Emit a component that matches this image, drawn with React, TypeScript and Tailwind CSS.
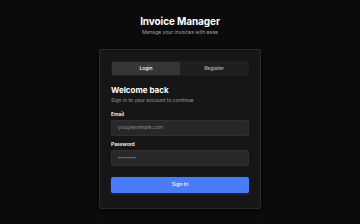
import React from "react";

export default function App() {
  return (
    <div
      className="min-h-[224px] w-full bg-[#0b0b0b] flex flex-col items-center text-white"
      style={{ fontFamily: "Inter, 'Noto Sans', sans-serif" }}
    >
      <h1 className="mt-[15px] text-[10px] leading-[12px] font-bold tracking-[-0.1px]">Invoice Manager</h1>
      <p className="mt-[1px] text-[5px] leading-[8px] text-[#a3a3a3]">Manage your invoices with ease</p>

      <div className="mt-[13px] w-[162px] rounded-[2px] border border-[#2a2a2a] bg-[#161616] px-[11px] pt-[11px] pb-[15px] shadow-[0_2px_6px_rgba(0,0,0,0.6)]">
        <div className="grid h-[15px] grid-cols-2 rounded-[2px] bg-[#1f1f1f] p-[1px]">
          <div className="flex items-center justify-center rounded-[1px] bg-[#363636] text-[5px] font-medium text-white">
            Login
          </div>
          <div className="flex items-center justify-center text-[5px] font-medium text-[#bdbdbd]">Register</div>
        </div>

        <h2 className="mt-[9px] text-[8px] leading-[10px] font-bold">Welcome back</h2>
        <p className="mt-[2px] text-[5px] leading-[7px] text-[#9a9a9a]">Sign in to your account to continue</p>

        <div className="mt-[7px] text-[5px] leading-[7px] font-semibold text-white">Email</div>
        <div className="mt-[2px] flex h-[16px] items-center rounded-[2px] border border-[#303030] bg-[#282828] px-[6px] text-[5px] text-[#8a8a8a]">
          you@example.com
        </div>

        <div className="mt-[5px] text-[5px] leading-[7px] font-semibold text-white">Password</div>
        <div className="mt-[2px] flex h-[16px] items-center rounded-[2px] border border-[#303030] bg-[#282828] px-[6px] text-[4px] text-[#a0a0a0]">
          ••••••••
        </div>

        <button className="mt-[11px] flex h-[16px] w-full items-center justify-center rounded-[2px] bg-[#4a7cf6] text-[5px] font-medium text-white shadow-[0_1px_3px_rgba(30,64,175,0.6)]">
          Sign In
        </button>
      </div>
    </div>
  );
}
